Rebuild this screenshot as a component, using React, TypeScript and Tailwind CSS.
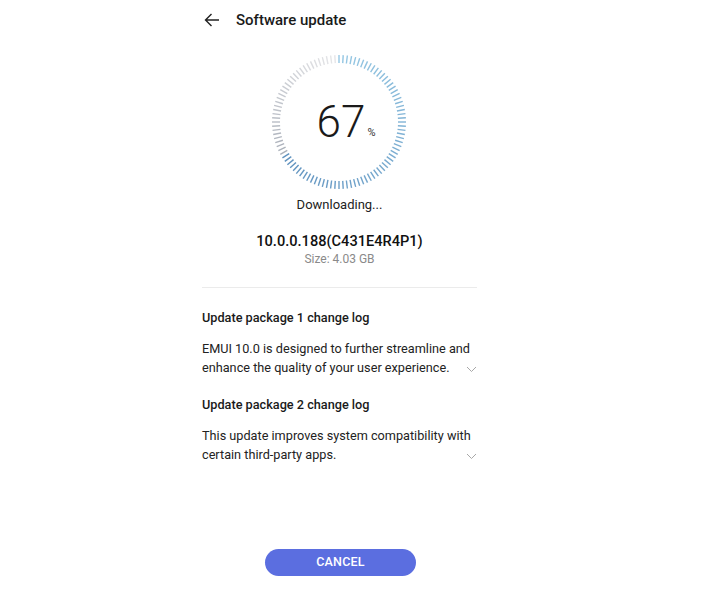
import React from "react";

const TICKS = 100;
const PROGRESS = 67;

function lerp(a: number, b: number, t: number) {
  return Math.round(a + (b - a) * t);
}

function ProgressRing() {
  const cx = 70;
  const cy = 70;
  const r1 = 59;
  const r2 = 67;
  const done = Math.round((TICKS * PROGRESS) / 100);
  const ticks = [];
  for (let i = 0; i < TICKS; i++) {
    const a = (i / TICKS) * Math.PI * 2;
    const sx = Math.sin(a);
    const sy = -Math.cos(a);
    let color: string;
    if (i < done) {
      const t = i / done;
      color = `rgb(${lerp(150, 95, t)},${lerp(200, 145, t)},${lerp(228, 190, t)})`;
    } else {
      const t = (i - done) / (TICKS - done);
      color = `rgb(${lerp(170, 232, t)},${lerp(176, 232, t)},${lerp(186, 234, t)})`;
    }
    ticks.push(
      <line
        key={i}
        x1={cx + sx * r1}
        y1={cy + sy * r1}
        x2={cx + sx * r2}
        y2={cy + sy * r2}
        stroke={color}
        strokeWidth={1.4}
      />
    );
  }
  return (
    <div className="relative w-[140px] h-[140px]">
      <svg width="140" height="140" viewBox="0 0 140 140">
        {ticks}
      </svg>
      <div className="absolute inset-0 flex items-center justify-center">
        <span className="text-[44px] leading-none font-light text-[#1a1a1a] ml-[14px]">67</span>
        <span className="text-[11px] text-[#333] mt-[22px] ml-[2px]">%</span>
      </div>
    </div>
  );
}

function Chevron() {
  return (
    <svg width="11" height="7" viewBox="0 0 11 7" className="shrink-0">
      <path d="M1 1 L5.5 5.5 L10 1" fill="none" stroke="#a8a8a8" strokeWidth="1" />
    </svg>
  );
}

function ChangeLog({ title, lines }: { title: string; lines: string[] }) {
  return (
    <div>
      <div className="text-[12.7px] leading-[18px] font-medium text-[#1a1a1a]">{title}</div>
      <div className="relative mt-[12px]">
        <p className="text-[12.7px] leading-[19px] text-[#222] whitespace-nowrap">
          {lines[0]}
          <br />
          {lines[1]}
        </p>
        <div className="absolute right-0 bottom-[4px]">
          <Chevron />
        </div>
      </div>
    </div>
  );
}

export default function App() {
  return (
    <div
      className="w-[701px] h-[592px] bg-white flex flex-col"
      style={{ fontFamily: "Roboto, 'Noto Sans', sans-serif" }}
    >
      <div className="ml-[202px] w-[275px] flex flex-col flex-1">
        {/* Header */}
        <div className="h-[40px] flex items-center gap-[16px] pl-[2px]">
          <svg width="16" height="14" viewBox="0 0 16 14">
            <path d="M15 7 H1.5 M7.5 1 L1.5 7 L7.5 13" fill="none" stroke="#222" strokeWidth="1.4" />
          </svg>
          <span className="text-[15px] font-medium text-[#1a1a1a]">Software update</span>
        </div>

        {/* Ring */}
        <div className="mt-[12px] flex justify-center pr-[1px]">
          <ProgressRing />
        </div>
        <div className="mt-[4px] text-center text-[13px] leading-[18px] text-[#222]">Downloading...</div>

        <div className="mt-[17px] text-center text-[14.6px] leading-[20px] font-medium text-[#111]">
          10.0.0.188(C431E4R4P1)
        </div>
        <div className="text-center text-[12px] leading-[16px] text-[#8a8a8a]">Size: 4.03 GB</div>

        <div className="mt-[20px] h-px bg-[#ebebeb]" />

        <div className="mt-[21px]">
          <ChangeLog
            title="Update package 1 change log"
            lines={["EMUI 10.0 is designed to further streamline and", "enhance the quality of your user experience."]}
          />
        </div>
        <div className="mt-[19px]">
          <ChangeLog
            title="Update package 2 change log"
            lines={["This update improves system compatibility with", "certain third-party apps."]}
          />
        </div>

        <div className="mt-auto pb-[16px] flex justify-center pl-[2px]">
          <button className="w-[151px] h-[27px] rounded-full bg-[#5b6ee0] text-white text-[12.5px] font-medium tracking-[0.2px]">
            CANCEL
          </button>
        </div>
      </div>
    </div>
  );
}
